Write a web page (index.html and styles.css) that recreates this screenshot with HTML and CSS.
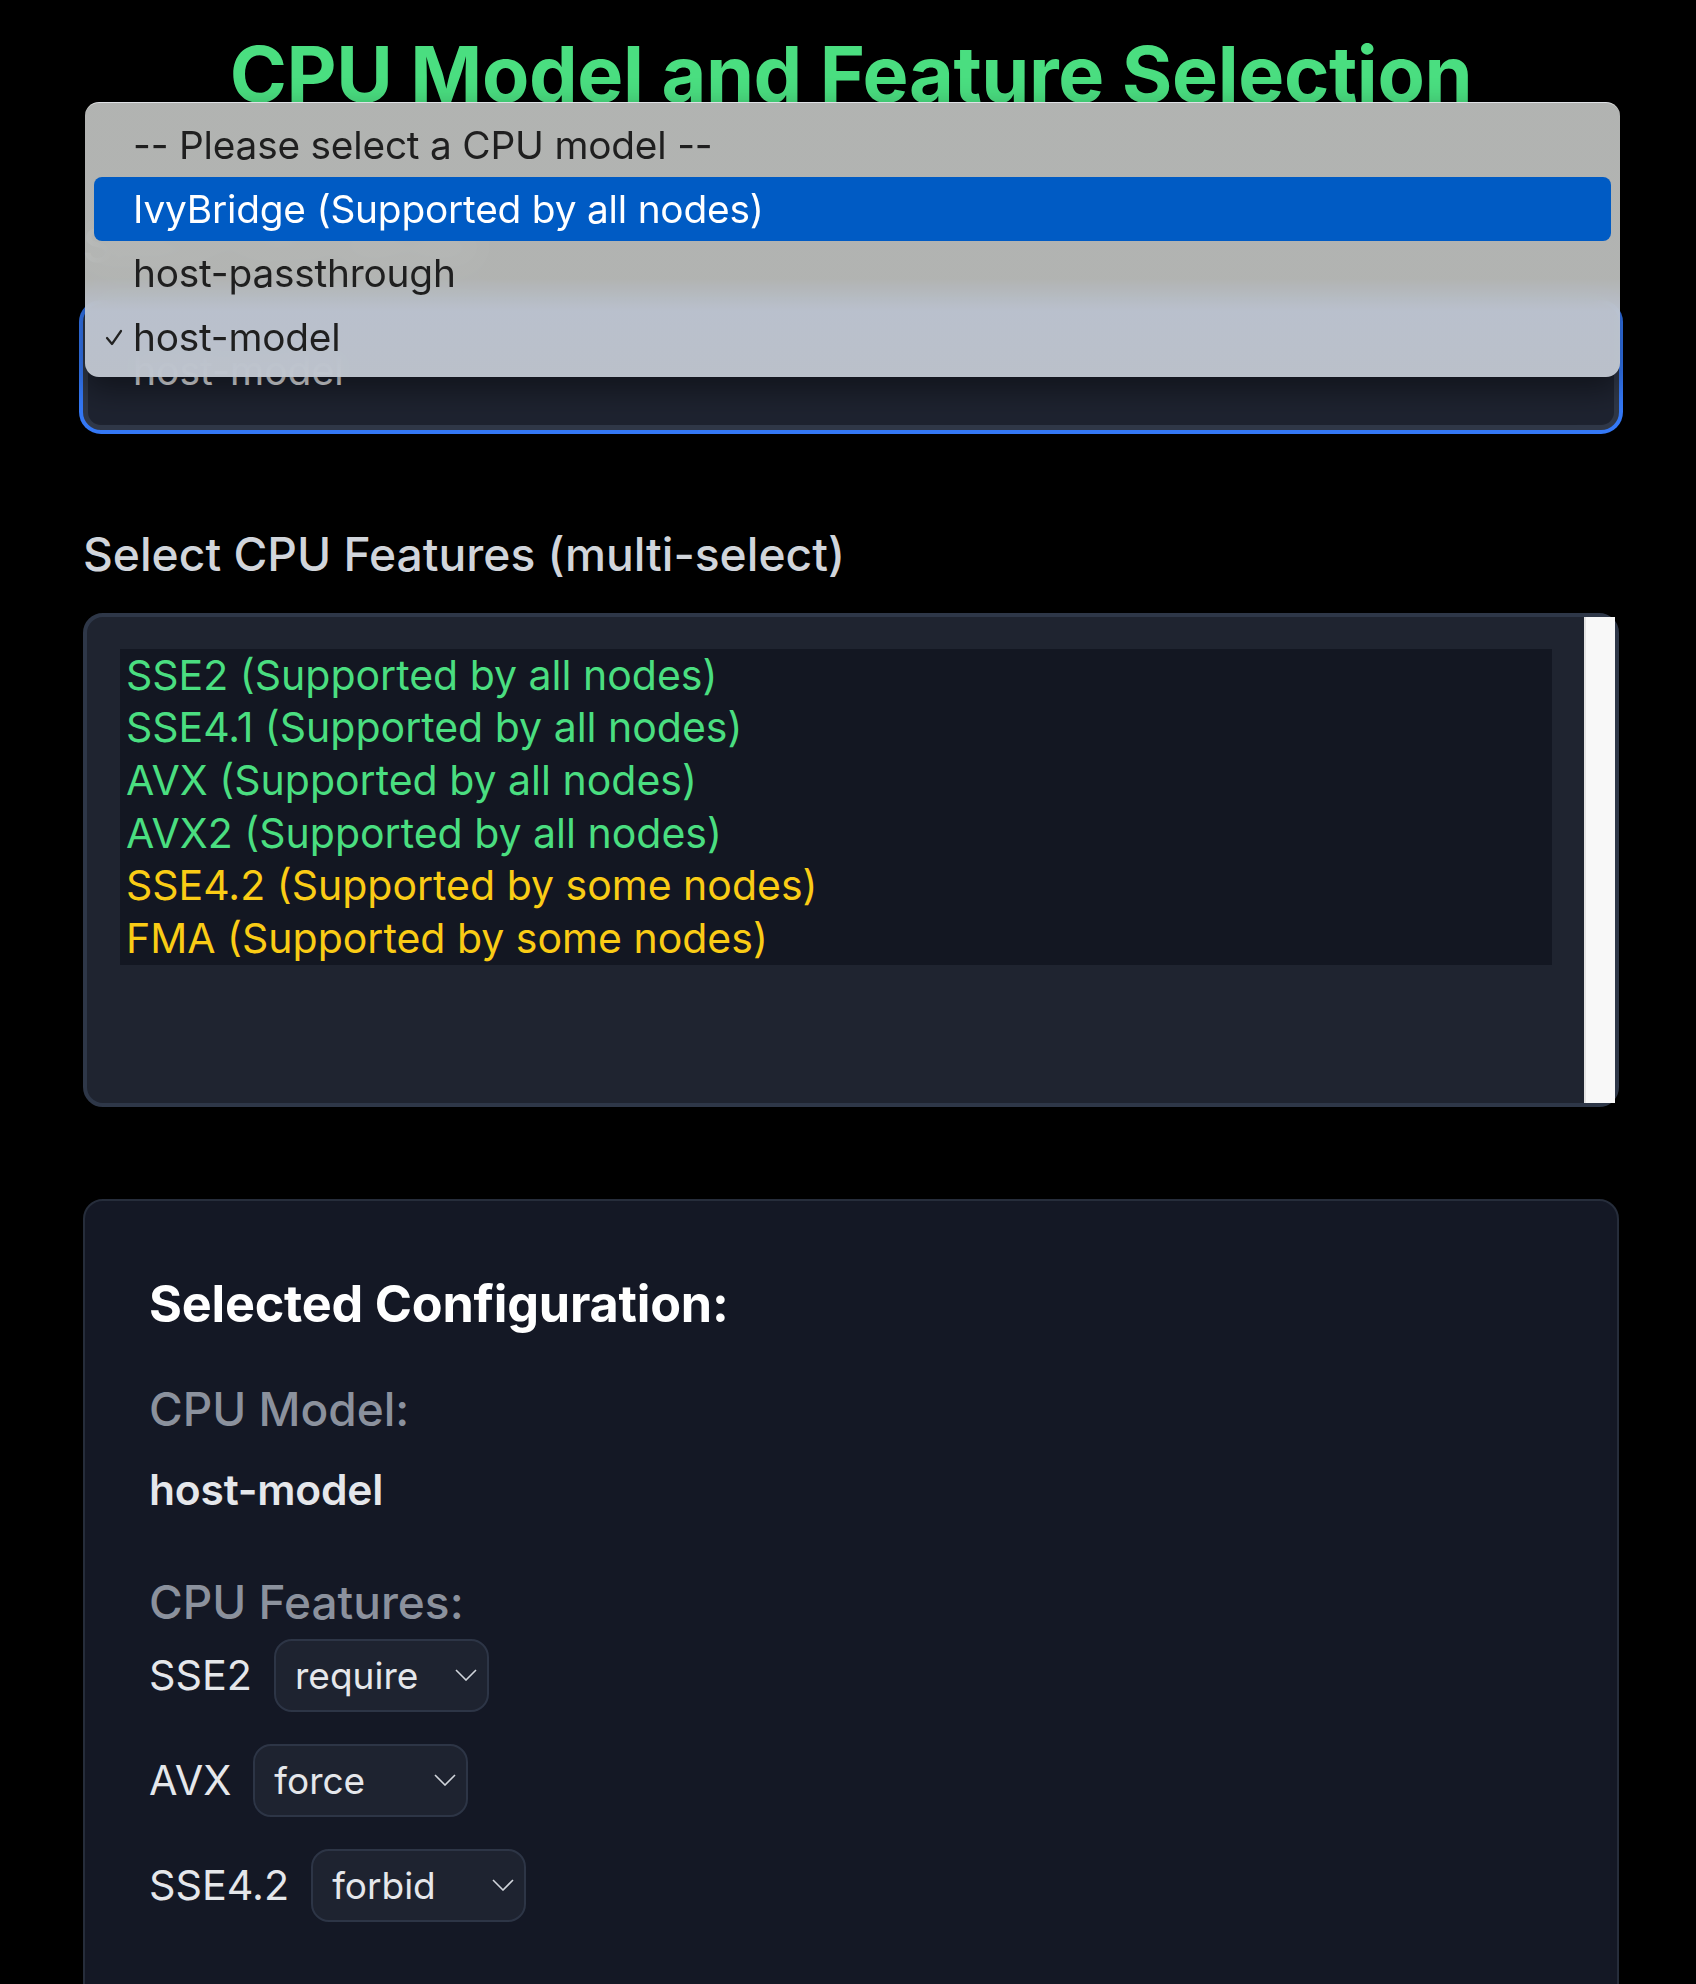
FILE: index.html
```html
<!DOCTYPE html>
<html lang="en">
<head>
<meta charset="utf-8">
<title>CPU Model and Feature Selection</title>
<link rel="stylesheet" href="styles.css">
</head>
<body>
<main class="page">
  <h1 class="title">CPU Model and Feature Selection</h1>

  <section class="field model-field">
    <label class="field-label">Select CPU Model</label>
    <div class="select-box is-focused"><span class="select-value">host-model</span></div>
  </section>

  <section class="field features-field">
    <label class="field-label">Select CPU Features (multi-select)</label>
    <div class="listbox">
      <div class="listbox-body">
        <ul class="options">
          <li class="opt all">SSE2 (Supported by all nodes)</li>
          <li class="opt all">SSE4.1 (Supported by all nodes)</li>
          <li class="opt all">AVX (Supported by all nodes)</li>
          <li class="opt all">AVX2 (Supported by all nodes)</li>
          <li class="opt some">SSE4.2 (Supported by some nodes)</li>
          <li class="opt some">FMA (Supported by some nodes)</li>
        </ul>
      </div>
      <div class="scrollbar"></div>
    </div>
  </section>

  <section class="config-card">
    <h2 class="config-title">Selected Configuration:</h2>
    <h3 class="config-label">CPU Model:</h3>
    <p class="config-value">host-model</p>
    <h3 class="config-label features-label">CPU Features:</h3>
    <div class="feature-rows">
      <div class="feature-row">
        <span class="feature-name">SSE2</span>
        <div class="mini-select"><span>require</span><svg class="chev" width="22" height="12" viewBox="0 0 22 12"><polyline points="1,1 11,11 21,1" fill="none" stroke="#d1d5db" stroke-width="1.6"/></svg></div>
      </div>
      <div class="feature-row">
        <span class="feature-name">AVX</span>
        <div class="mini-select"><span>force</span><svg class="chev" width="22" height="12" viewBox="0 0 22 12"><polyline points="1,1 11,11 21,1" fill="none" stroke="#d1d5db" stroke-width="1.6"/></svg></div>
      </div>
      <div class="feature-row">
        <span class="feature-name">SSE4.2</span>
        <div class="mini-select"><span>forbid</span><svg class="chev" width="22" height="12" viewBox="0 0 22 12"><polyline points="1,1 11,11 21,1" fill="none" stroke="#d1d5db" stroke-width="1.6"/></svg></div>
      </div>
    </div>
  </section>

  <div class="popup-menu">
    <div class="popup-row">-- Please select a CPU model --</div>
    <div class="popup-row is-hover">IvyBridge (Supported by all nodes)</div>
    <div class="popup-row">host-passthrough</div>
    <div class="popup-row is-checked"><svg class="check" width="18" height="18" viewBox="0 0 18 18"><polyline points="2,9 7,15 16,2" fill="none" stroke="#222" stroke-width="2.2" stroke-linecap="round" stroke-linejoin="round"/></svg>host-model</div>
  </div>
</main>
</body>
</html>
```

FILE: styles.css
```css
* { box-sizing: border-box; }

html, body {
  margin: 0;
  padding: 0;
  background: #000;
}

body {
  font-family: "Inter", "Noto Sans", "Liberation Sans", sans-serif;
  color: #e5e7eb;
}

.page {
  position: relative;
  width: 1536px;
  margin-left: 83px;
  padding-top: 36px;
  padding-bottom: 200px;
}

.title {
  margin: 0;
  font-size: 77.3px;
  line-height: 76px;
  font-weight: 700;
  letter-spacing: -0.4px;
  color: #4ade80;
  text-align: center;
}

.field-label {
  display: block;
  font-size: 46.2px;
  line-height: 52.8px;
  font-weight: 500;
  color: #d1d5db;
}

.model-field { margin-top: 107px; }

.select-box {
  margin-top: 32px;
  height: 126px;
  border: 5px solid #2f3747;
  border-radius: 18px;
  background: #1e2330;
  display: flex;
  align-items: center;
  padding: 8px 0 0 45px;
  font-size: 39px;
  color: #e5e7eb;
}

.select-box.is-focused {
  box-shadow: 0 0 0 4px #3478f6;
}

.features-field { margin-top: 98px; }

.listbox {
  margin-top: 32px;
  height: 494px;
  border: 4px solid #2e3748;
  border-radius: 20px;
  background: #1f2430;
  display: flex;
}

.listbox-body {
  flex: 1;
  padding: 32px 32px 32px 33px;
}

.options {
  list-style: none;
  margin: 0;
  padding: 0;
  background: #131722;
}

.opt {
  font-size: 41px;
  line-height: 52.67px;
  padding-left: 6px;
}

.opt.all { color: #4ade80; }
.opt.some { color: #facc15; }

.scrollbar {
  width: 31px;
  background: #f8f8f8;
  border-left: 2px solid #e3e3e3;
}

.config-card {
  margin-top: 92px;
  border: 2px solid #262d3b;
  border-radius: 20px;
  background: #141825;
  padding: 64px 64px 80px;
}

.config-title {
  margin: 11px 0 0;
  font-size: 50.3px;
  line-height: 55.2px;
  font-weight: 700;
  color: #fff;
  letter-spacing: -0.2px;
}

.config-label {
  margin: 53px 0 0;
  font-size: 46px;
  line-height: 50.4px;
  font-weight: 500;
  color: #8b919d;
}

.config-value {
  margin: 32px 0 0;
  font-size: 42.5px;
  line-height: 48px;
  font-weight: 600;
  color: #e5e7eb;
  letter-spacing: -0.2px;
}

.config-label.features-label { margin-top: 63px; }

.feature-rows {
  margin-top: 11px;
  display: flex;
  flex-direction: column;
  gap: 32px;
}

.feature-row {
  display: flex;
  align-items: center;
  gap: 22px;
}

.feature-name {
  font-size: 41.3px;
  line-height: 48px;
  color: #e5e7eb;
}

.mini-select {
  width: 215px;
  height: 73px;
  border: 2px solid #2d3546;
  border-radius: 18px;
  background: #1e2330;
  display: flex;
  align-items: center;
  justify-content: space-between;
  padding: 0 10px 0 19px;
  font-size: 37px;
  color: #e5e7eb;
}

.chev { display: block; }

.popup-menu {
  position: absolute;
  top: 102px;
  left: 2px;
  width: 1535px;
  height: 275px;
  padding: 10px 9px 9px;
  border-radius: 14px;
  border-top: 1px solid rgba(255, 255, 255, 0.55);
  background: linear-gradient(180deg,
    rgba(187, 189, 187, 0.95) 0%,
    rgba(187, 189, 187, 0.95) 64%,
    rgba(192, 199, 211, 0.96) 76%,
    rgba(193, 199, 208, 0.96) 100%);
  backdrop-filter: blur(16px);
  box-shadow: 0 12px 32px rgba(0, 0, 0, 0.45);
}

.popup-row {
  position: relative;
  height: 64px;
  line-height: 64px;
  padding-left: 39px;
  font-size: 38.8px;
  color: #1f1f1f;
  border-radius: 8px;
  letter-spacing: -0.2px;
}

.popup-row.is-hover {
  background: #005bc4;
  color: #fff;
}

.check {
  position: absolute;
  left: 11px;
  top: 24px;
}
```
